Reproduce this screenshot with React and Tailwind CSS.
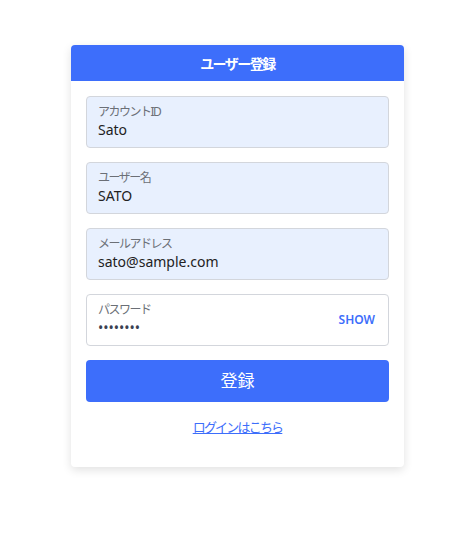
import React from "react";

function Field({ label, value, filled, right, password }) {
  return (
    <div
      className={`h-[52px] rounded-[4px] border border-[#d3d6dc] flex items-center pl-[11px] pr-[13px] ${
        filled ? "bg-[#e8f0fe]" : "bg-white"
      }`}
    >
      <div className="flex-1 flex flex-col justify-center">
        <div className="text-[12px] leading-[16px] text-[#6b6f76] tracking-[-1.5px]">{label}</div>
        <div
          className={`text-[14px] leading-[20px] ${password ? "text-[#3a4152] text-[13px]" : "text-[#222]"}`}
        >
          {value}
        </div>
      </div>
      {right}
    </div>
  );
}

export default function App() {
  return (
    <div
      className="w-[475px] h-[540px] bg-white pt-[45px]"
      style={{ fontFamily: '"Noto Sans", "Noto Sans CJK JP", sans-serif' }}
    >
      <div className="mx-auto w-[333px] bg-white rounded-[4px] shadow-[0_3px_10px_rgba(0,0,0,0.12)]">
        <div className="h-[36px] bg-[#3d6efb] rounded-t-[4px] flex items-center justify-center text-white text-[14px] font-bold tracking-[-1.5px]">
          ユーザー登録
        </div>
        <div className="px-[15px] pt-[15px] pb-[30px] flex flex-col gap-[14px]">
          <Field label="アカウントID" value="Sato" filled />
          <Field label="ユーザー名" value="SATO" filled />
          <Field label="メールアドレス" value="sato@sample.com" filled />
          <Field
            label="パスワード"
            value="••••••••"
            password
            right={
              <span className="text-[12px] font-semibold text-[#3d6efb]">SHOW</span>
            }
          />
          <button className="h-[42px] rounded-[4px] bg-[#3d6efb] text-white text-[17px]">
            登録
          </button>
          <div className="text-center leading-[20px]">
            <a className="text-[13px] text-[#3d6efb] underline tracking-[-1.8px]">ログインはこちら</a>
          </div>
        </div>
      </div>
    </div>
  );
}
